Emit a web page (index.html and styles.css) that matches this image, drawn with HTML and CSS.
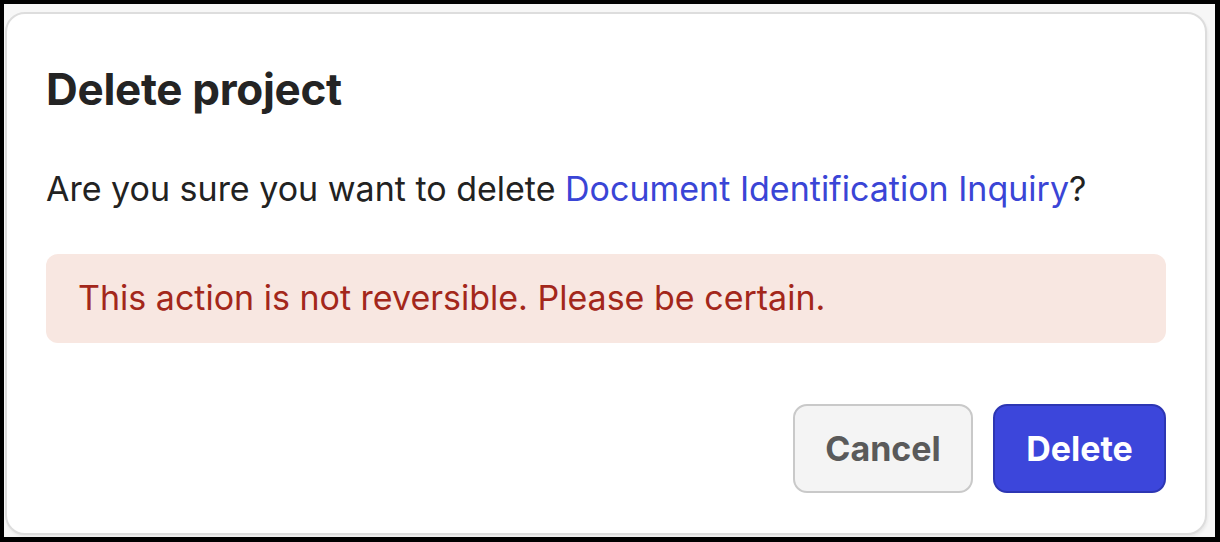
FILE: index.html
```html
<!DOCTYPE html>
<html lang="en">
<head>
<meta charset="utf-8">
<title>Delete project</title>
<link rel="stylesheet" href="styles.css">
</head>
<body>
<div class="frame">
  <div class="dialog" role="dialog" aria-labelledby="dlg-title">
    <h1 class="title" id="dlg-title">Delete project</h1>
    <p class="message">Are you sure you want to delete <a class="project-link" href="#">Document Identification Inquiry</a>?</p>
    <div class="warning">This action is not reversible. Please be certain.</div>
    <div class="actions">
      <button class="btn btn-cancel" type="button">Cancel</button>
      <button class="btn btn-delete" type="button">Delete</button>
    </div>
  </div>
</div>
</body>
</html>
```

FILE: styles.css
```css
html, body {
  margin: 0;
  padding: 0;
  height: 100%;
}
body {
  background: #000;
  font-family: Inter, "Noto Sans", "Liberation Sans", sans-serif;
  color: #222;
}
.frame {
  box-sizing: border-box;
  margin: 4px 5px 5px 4px;
  height: 533px;
  padding: 8px 8px 2px 1px;
  background: #f7f7f7;
}
.dialog {
  box-sizing: border-box;
  height: 100%;
  background: #fff;
  border: 2px solid #dddddd;
  border-radius: 20px;
  padding: 49px 39px 40px 39px;
  display: flex;
  flex-direction: column;
  box-shadow: 1px 2px 3px rgba(0,0,0,0.06);
}
.title {
  margin: 0;
  font-size: 44px;
  line-height: 52px;
  font-weight: 700;
  color: #242424;
  letter-spacing: -0.3px;
}
.message {
  margin: 52px 0 0 0;
  font-size: 34px;
  line-height: 44px;
  color: #222;
}
.project-link {
  color: #3a45d6;
  text-decoration: none;
}
.warning {
  margin-top: 43px;
  background: #f8e7e1;
  color: #a3271b;
  border-radius: 12px;
  padding: 22px 32px 23px;
  font-size: 34px;
  line-height: 44px;
}
.actions {
  margin-top: 61px;
  display: flex;
  justify-content: flex-end;
  gap: 20px;
}
.btn {
  box-sizing: border-box;
  height: 89px;
  border-radius: 14px;
  font-family: inherit;
  font-size: 34px;
  font-weight: 700;
  padding: 0;
  cursor: pointer;
}
.btn-cancel {
  width: 180px;
  background: #f4f4f4;
  border: 2px solid #c9c9c9;
  color: #5a5a5a;
}
.btn-delete {
  width: 173px;
  background: #3c46db;
  border: 2px solid #2d36b3;
  color: #fff;
}
```
